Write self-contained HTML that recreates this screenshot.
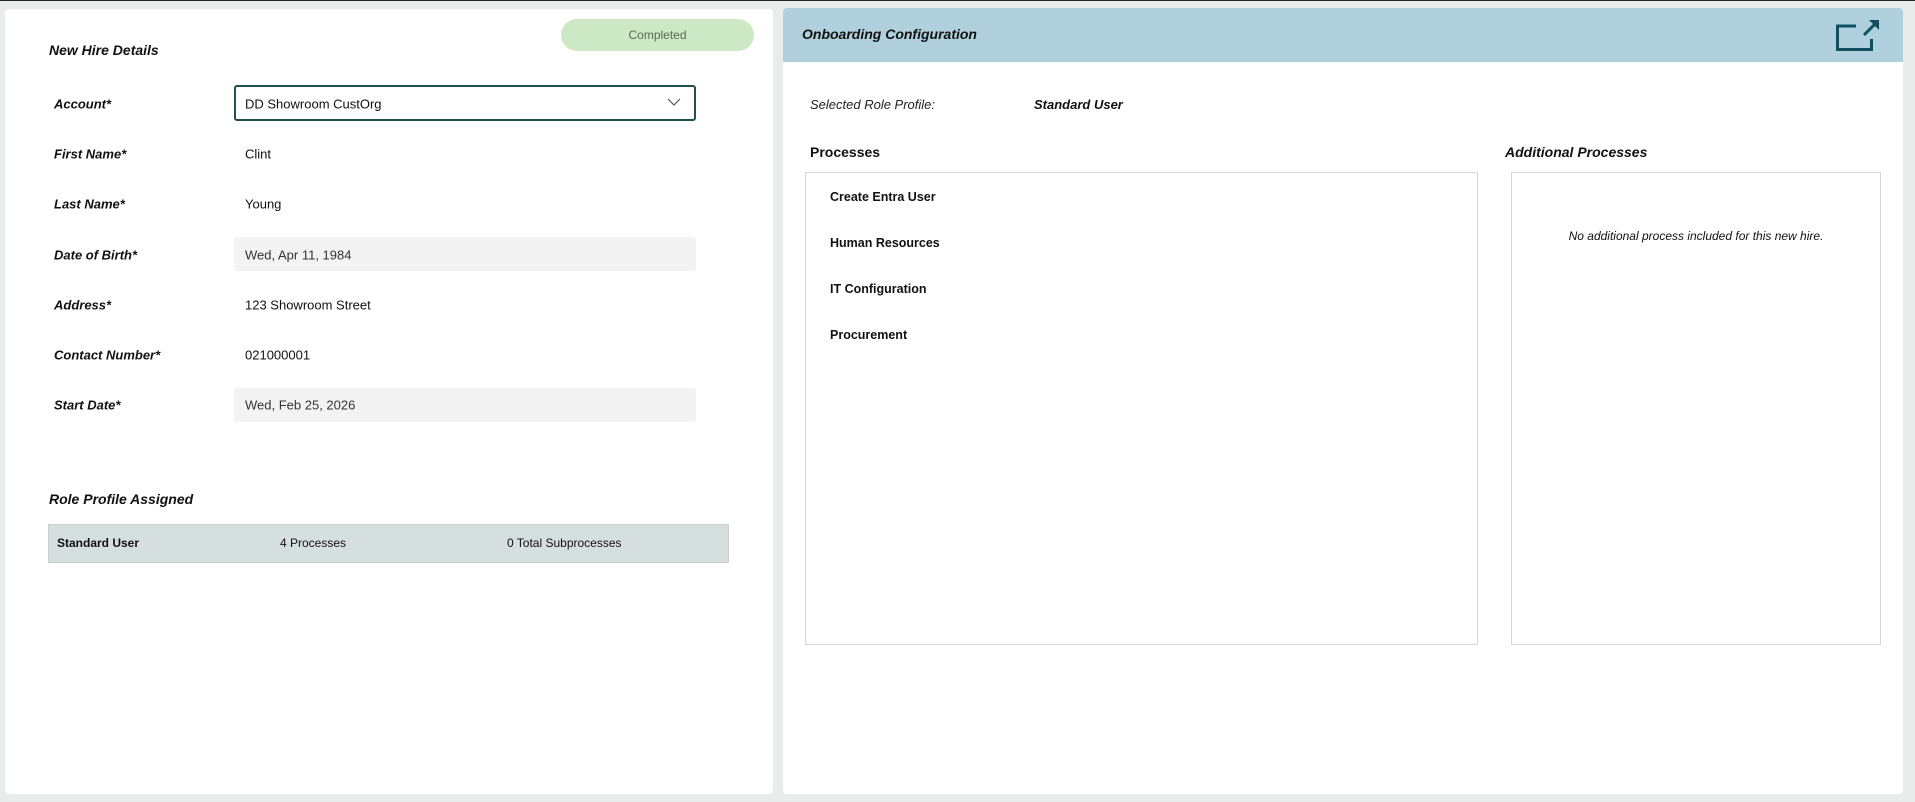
<!DOCTYPE html>
<html><head><meta charset="utf-8"><style>
*{margin:0;padding:0;box-sizing:border-box}
body{width:1915px;height:802px;background:#e8eceb;font-family:"Liberation Sans",sans-serif;position:relative;overflow:hidden;border-top:1px solid #222}
.a{position:absolute;white-space:nowrap}
.p{position:absolute;background:#fff;border-radius:4px}
.lbl{font-weight:bold;font-style:italic;font-size:13px;color:#111;left:54px;transform:translateY(-50%)}
.val{font-size:13px;color:#111;left:245px;transform:translateY(-50%)}
.box{position:absolute;left:234px;width:462px;border-radius:3px}
</style></head><body>
<div class="p" style="left:5px;top:8px;width:768px;height:785px"></div>
<div class="a" style="left:561px;top:18px;width:193px;height:32px;border-radius:16px;background:#cce8c4;color:#5a6b55;font-size:12px;text-align:center;line-height:32px">Completed</div>
<div class="a" style="left:49px;top:41px;font-weight:bold;font-style:italic;font-size:14px;color:#111">New Hire Details</div>
<div class="box" style="top:84px;height:36px;border:2px solid #1f4f4f"></div>
<svg class="a" style="left:667px;top:96px" width="14" height="10"><path d="M1 2 L7 8 L13 2" fill="none" stroke="#555" stroke-width="1.2"/></svg>
<div class="box" style="top:236px;height:34px;background:#f3f3f3"></div>
<div class="box" style="top:387px;height:34px;background:#f3f3f3"></div>
<div class="a lbl" style="top:103px">Account*</div>
<div class="a lbl" style="top:153px">First Name*</div>
<div class="a lbl" style="top:203px">Last Name*</div>
<div class="a lbl" style="top:254px">Date of Birth*</div>
<div class="a lbl" style="top:304px">Address*</div>
<div class="a lbl" style="top:354px">Contact Number*</div>
<div class="a lbl" style="top:404px">Start Date*</div>
<div class="a val" style="top:103px">DD Showroom CustOrg</div>
<div class="a val" style="top:153px">Clint</div>
<div class="a val" style="top:203px">Young</div>
<div class="a val" style="top:254px;color:#333">Wed, Apr 11, 1984</div>
<div class="a val" style="top:304px">123 Showroom Street</div>
<div class="a val" style="top:354px">021000001</div>
<div class="a val" style="top:404px;color:#333">Wed, Feb 25, 2026</div>
<div class="a" style="left:49px;top:490px;font-weight:bold;font-style:italic;font-size:14px;color:#111">Role Profile Assigned</div>
<div class="a" style="left:48px;top:523px;width:681px;height:39px;background:#d5dfdd;border:1px solid #c8d0ce;font-size:12px;line-height:37px;color:#111">
<span class="a" style="left:8px;font-weight:bold">Standard User</span>
<span class="a" style="left:231px">4 Processes</span>
<span class="a" style="left:458px">0 Total Subprocesses</span></div>

<div class="p" style="left:783px;top:7px;width:1120px;height:786px"></div>
<div class="a" style="left:783px;top:7px;width:1120px;height:54px;background:#afd0dc;border-radius:4px 4px 0 0"></div>
<div class="a" style="left:802px;top:25px;font-weight:bold;font-style:italic;font-size:14px;color:#111">Onboarding Configuration</div>
<svg class="a" style="left:1830px;top:15px" width="52" height="40"><path d="M26 10 H7.5 V33.5 H41.5 V23" fill="none" stroke="#0f4f60" stroke-width="3"/><path d="M34 19 L46 7" stroke="#0f4f60" stroke-width="3"/><path d="M39 4 H49 V14 Z" fill="#0f4f60"/></svg>
<div class="a" style="left:810px;top:96px;font-style:italic;font-size:13px;color:#222">Selected Role Profile:</div>
<div class="a" style="left:1034px;top:96px;font-weight:bold;font-style:italic;font-size:13px;color:#111">Standard User</div>
<div class="a" style="left:810px;top:143px;font-weight:bold;font-size:14px;color:#111">Processes</div>
<div class="a" style="left:1505px;top:143px;font-weight:bold;font-style:italic;font-size:14px;color:#111">Additional Processes</div>
<div class="a" style="left:805px;top:171px;width:673px;height:473px;border:1px solid #d3d8da"></div>
<div class="a" style="left:1511px;top:171px;width:370px;height:473px;border:1px solid #d3d8da"></div>
<div class="a" style="left:830px;top:189px;font-weight:bold;font-size:12.5px;color:#111">Create Entra User</div>
<div class="a" style="left:830px;top:235px;font-weight:bold;font-size:12.5px;color:#111">Human Resources</div>
<div class="a" style="left:830px;top:281px;font-weight:bold;font-size:12.5px;color:#111">IT Configuration</div>
<div class="a" style="left:830px;top:327px;font-weight:bold;font-size:12.5px;color:#111">Procurement</div>
<div class="a" style="left:1511px;top:228px;width:370px;text-align:center;font-style:italic;font-size:12px;color:#111">No additional process included for this new hire.</div>
</body></html>
